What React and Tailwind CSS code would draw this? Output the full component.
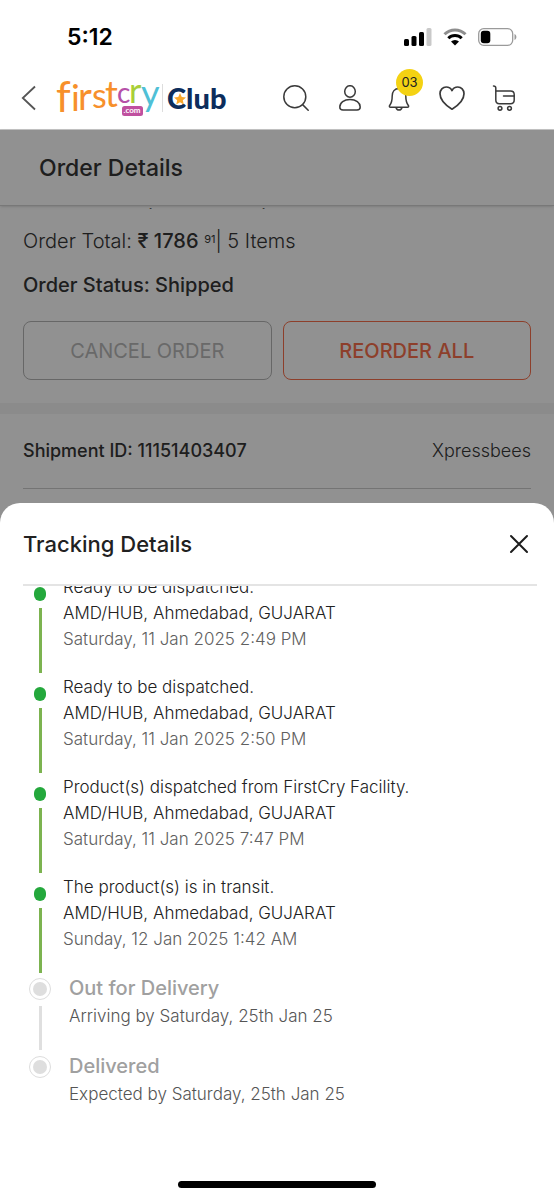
import React from "react";

const events = [
  { text: "Ready to be dispatched.", date: "Saturday, 11 Jan 2025 2:49 PM" },
  { text: "Ready to be dispatched.", date: "Saturday, 11 Jan 2025 2:50 PM" },
  { text: "Product(s) dispatched from FirstCry Facility.", date: "Saturday, 11 Jan 2025 7:47 PM" },
  { text: "The product(s) is in transit.", date: "Sunday, 12 Jan 2025 1:42 AM" },
];

const upcoming = [
  { title: "Out for Delivery", text: "Arriving by Saturday, 25th Jan 25" },
  { title: "Delivered", text: "Expected by Saturday, 25th Jan 25" },
];

function StatusBar() {
  return (
    <div className="flex h-[66px] items-center justify-between pt-2 pr-[37px] pl-[67px]">
      <span className="text-[23px] leading-7 font-semibold text-black">5:12</span>
      <div className="flex items-center gap-[11px]" aria-hidden="true">
        <svg width="28" height="18" viewBox="0 0 28 18">
          <rect x="0" y="11" width="5" height="7" rx="1.5" />
          <rect x="7.500" y="8" width="5" height="10" rx="1.500" />
          <rect x="15" y="4" width="5" height="14" rx="1.500" />
          <rect x="22.500" y="0" width="5" height="18" rx="1.500" fill="#c9c9c9" />
        </svg>
        <svg width="24" height="18" viewBox="0 0 24 18" fill="none">
          <path d="M1.500 6.200a15 15 0 0 1 21 0" stroke="#8e8e8e" strokeWidth="3" />
          <path d="M5.300 10.300a9.600 9.600 0 0 1 13.400 0" stroke="#000" strokeWidth="3" />
          <path d="M8 13.500a5.800 5.800 0 0 1 8 0L12 17.600Z" fill="#000" />
        </svg>
        <svg width="39" height="18" viewBox="0 0 39 18" fill="none">
          <rect x="0.700" y="0.700" width="34" height="16.600" rx="5" stroke="#9a9a9a" strokeWidth="1.300" />
          <rect x="2.800" y="2.800" width="9.500" height="12.400" rx="3" fill="#000" />
          <path d="M36.500 6v6c2.500-1 2.500-5 0-6Z" fill="#9a9a9a" />
        </svg>
      </div>
    </div>
  );
}

function Logo() {
  return (
    <a href="#home" className="ml-5 flex h-10 items-center" aria-label="firstcry.com Club">
      <svg width="103" height="40" viewBox="0 0 103 40" className="overflow-visible font-['Lato',sans-serif]">
        <g fill="#f7902b">
          <text x="0" y="34" fontSize="42">f</text>
          <text x="15" y="33" fontSize="37">i</text>
          <text x="22" y="32" fontSize="38">r</text>
          <text x="36" y="30" fontSize="34">s</text>
          <text x="49" y="29" fontSize="36">t</text>
        </g>
        <text x="61" y="25" fontSize="28" fill="#b650a8">c</text>
        <text x="73" y="25" fontSize="34" fill="#a8cf38">r</text>
        <text x="85" y="28" fontSize="36" fill="#4fc0d6">y</text>
        <rect x="66" y="28" width="21" height="10" rx="2.500" fill="#c0509f" />
        <text x="76" y="35" fontSize="8" fontWeight="700" textAnchor="middle" fill="#fff">.com</text>
      </svg>
      <span className="mx-[3px] h-7 w-px bg-[#dddddd]" />
      <span className="relative ml-px font-['Lato',sans-serif] text-[29px] leading-8 font-black text-[#0c2d5c]">
        Club
        <svg className="absolute top-[11px] left-[7px]" width="12" height="12" viewBox="0 0 24 24" fill="#f9a72b" aria-hidden="true">
          <path d="M12 0l3.500 8 8.500.9-6.400 5.700 1.900 8.400L12 18.700 4.500 23l1.900-8.400L0 8.900 8.500 8Z" />
        </svg>
      </span>
    </a>
  );
}

const iconButton = "relative flex h-[26px] w-[26px] items-center justify-center";

function AppBar() {
  return (
    <div className="flex h-16 items-center border-b border-[#c4c4c4] pr-[37px] pl-[21px]">
      <button type="button" aria-label="Back">
        <svg width="15" height="26" viewBox="0 0 15 26" fill="none" stroke="#555" strokeWidth="1.800">
          <path d="M14 1.500 1.800 13 14 24.500" />
        </svg>
      </button>
      <Logo />
      <nav className="ml-auto flex gap-[26px]">
        <button type="button" aria-label="Search" className={iconButton}>
          <svg width="26" height="26" viewBox="0 0 26 26" fill="none" stroke="#3a3a3a" strokeWidth="1.500" strokeLinecap="round">
            <circle cx="11.800" cy="11.800" r="11" />
            <path d="m19.600 19.600 5.600 5.600" />
          </svg>
        </button>
        <button type="button" aria-label="Account" className={iconButton}>
          <svg width="26" height="26" viewBox="0 0 26 26" fill="none" stroke="#3a3a3a" strokeWidth="1.500">
            <ellipse cx="15" cy="6.500" rx="5.300" ry="5.800" />
            <path d="M15 14.500c-6 0-10.200 3.300-10.200 7.500 0 2 1.200 3 3.200 3h14c2 0 3.200-1 3.200-3 0-4.200-4.200-7.500-10.200-7.500Z" />
          </svg>
        </button>
        <button type="button" aria-label="Notifications, 03 new" className={iconButton}>
          <svg width="26" height="26" viewBox="0 0 26 26" fill="none" stroke="#3a3a3a" strokeWidth="1.500" strokeLinejoin="round">
            <path d="M12 3.500c-4.500 0-6.800 3.200-6.800 7.500 0 5-.7 7-2.400 9.300-.8 1.100-.4 2 .8 2h16.800c1.200 0 1.600-.9.800-2-1.700-2.300-2.400-4.300-2.400-9.300 0-4.300-2.300-7.500-6.800-7.500Z" />
            <path d="M9 22.500c.4 1.700 1.500 2.500 3 2.500s2.600-.8 3-2.500" />
          </svg>
          <span className="absolute -top-4 -right-[10px] flex h-[27px] w-[27px] items-center justify-center rounded-full bg-[#f4d213] text-[13px] leading-4 text-[#222]">
            03
          </span>
        </button>
        <button type="button" aria-label="Wishlist" className={iconButton}>
          <svg width="26" height="26" viewBox="0 0 26 26" fill="none" stroke="#3a3a3a" strokeWidth="1.700" strokeLinejoin="round">
            <path d="M13 24.200C9 21.700 1 16.200 1 8.700 1 4.800 3.800 2 7.200 2c2.600 0 4.700 1.300 5.800 3.600C14.100 3.300 16.200 2 18.800 2 22.200 2 25 4.800 25 8.700c0 7.500-8 13-12 15.500Z" />
          </svg>
        </button>
        <button type="button" aria-label="Cart" className={iconButton}>
          <svg width="26" height="26" viewBox="0 0 26 26" fill="none" stroke="#3a3a3a" strokeWidth="1.500" strokeLinecap="round" strokeLinejoin="round">
            <path d="M2.500.900c1.500 0 2.300.6 2.300 2V15c0 2.500 1 3.700 3.500 3.700h11.200c2.500 0 3.700-1.200 3.700-3.700V9.500c0-2.500-1.200-3.500-3.700-3.500H4.800" />
            <path d="M12.500 11h10.700" />
            <circle cx="9" cy="23.300" r="1.900" />
            <circle cx="18.500" cy="23.300" r="1.900" />
          </svg>
        </button>
      </nav>
    </div>
  );
}

function OrderPage() {
  return (
    <main className="relative bg-white text-[#353535]">
      <h1 className="flex h-[76px] items-center border-b border-[#d4d4d4] pl-[39px] text-[23px] leading-8 font-medium shadow-sm">
        Order Details
      </h1>
      <div className="flex h-[3px] items-end gap-[108px] overflow-hidden pl-[148px] text-[17px] leading-[10px]" aria-hidden="true">
        <span>,</span>
        <span>,</span>
      </div>
      <section className="px-[23px] pt-[18px] pb-[23px]">
        <p className="text-[20px] leading-7 font-light">
          Order Total: <span className="font-medium">₹ 1786</span>{" "}
          <sup className="top-[-5px] text-[11px] leading-3 font-normal">91</sup>| 5 Items
        </p>
        <p className="mt-4 text-[20px] leading-7 font-medium">Order Status: Shipped</p>
        <div className="mt-[22px] grid grid-cols-2 gap-[11px]">
          <button type="button" className="h-[59px] rounded-[8px] border border-[#b5b5b5] text-[20px] leading-7 text-[#b9b9b9]">
            CANCEL ORDER
          </button>
          <button type="button" className="h-[59px] rounded-[8px] border border-[#f8704c] text-[20px] leading-7 font-medium text-[#f8704c]">
            REORDER ALL
          </button>
        </div>
      </section>
      <div className="h-[11px] bg-[#f5f5f5]" />
      <section className="mx-[23px] flex h-[75px] items-center justify-between border-b border-[#cccccc]">
        <h2 className="text-[18px] leading-7 font-medium">Shipment ID: 11151403407</h2>
        <span className="text-[18px] leading-7 font-light">Xpressbees</span>
      </section>
      <div className="h-9" />
      <div className="absolute inset-0 bg-black/43" />
    </main>
  );
}

function TrackingSheet() {
  return (
    <section className="relative -mt-[22px] flex flex-1 flex-col rounded-t-[20px] bg-white" role="dialog" aria-labelledby="tracking-title">
      <header className="mr-[17px] ml-[23px] flex h-[83px] items-center justify-between border-b-2 border-[#e4e4e4] pr-2">
        <h2 id="tracking-title" className="text-[22px] leading-8 font-medium text-[#212121]">Tracking Details</h2>
        <button type="button" aria-label="Close">
          <svg width="20" height="20" viewBox="0 0 20 20" fill="none" stroke="#1c1c1c" strokeWidth="2" strokeLinecap="round">
            <path d="m2 2 16 16M18 2 2 18" />
          </svg>
        </button>
      </header>
      <div className="overflow-hidden px-[23px]">
        <ol className="-mt-3">
          {events.map((event) => (
            <li key={event.date} className="flex h-[100px] gap-[6px]">
              <div className="flex w-[34px] flex-col items-center pt-[13px]">
                <span className="h-[14px] w-[12px] rounded-full bg-[#24a83c]" />
                <span className="mt-[7px] h-[65px] w-[3px] bg-[#7cb350]" />
              </div>
              <div className="text-[17px] leading-[26px] font-light text-[#212121]">
                <p>{event.text}</p>
                <p>AMD/HUB, Ahmedabad, GUJARAT</p>
                <p className="text-[#606060]">{event.date}</p>
              </div>
            </li>
          ))}
          {upcoming.map((step, i) => (
            <li key={step.title} className="flex h-[78px] gap-[12px]">
              <div className="flex w-[34px] flex-col items-center pt-[4px]">
                <span className="flex h-[22px] w-[22px] items-center justify-center rounded-full border border-[#dddddd]">
                  <span className="h-[14px] w-[14px] rounded-full bg-[#dedede]" />
                </span>
                {i < upcoming.length - 1 && <span className="mt-[6px] h-[44px] w-[3px] bg-[#dfdfdf]" />}
              </div>
              <div>
                <h3 className="text-[20px] leading-7 font-medium text-[#a0a0a0]">{step.title}</h3>
                <p className="text-[17px] leading-7 font-light text-[#555555]">{step.text}</p>
              </div>
            </li>
          ))}
        </ol>
      </div>
      <div className="mx-auto mt-auto mb-3 h-[7px] w-[198px] rounded-full bg-black" />
    </section>
  );
}

export default function App() {
  return (
    <div className="flex min-h-screen flex-col bg-white font-['Inter',sans-serif]">
      <header>
        <StatusBar />
        <AppBar />
      </header>
      <OrderPage />
      <TrackingSheet />
    </div>
  );
}
